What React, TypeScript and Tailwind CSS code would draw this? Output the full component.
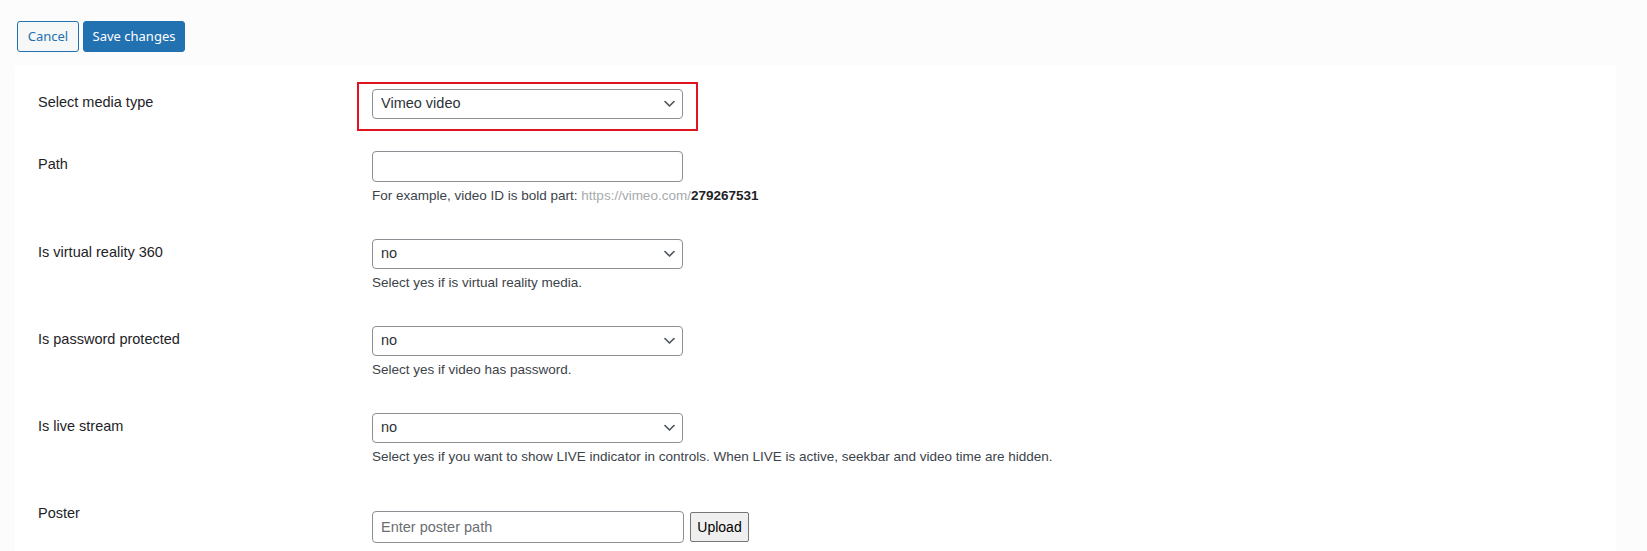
import React from 'react';

const Chevron = () => (
  <svg
    className="pointer-events-none absolute right-[8px] top-1/2 -translate-y-1/2"
    width="11"
    height="7"
    viewBox="0 0 11 7"
    fill="none"
  >
    <polyline
      points="1,1 5.5,5.5 10,1"
      stroke="#50575e"
      strokeWidth="1.7"
      strokeLinecap="round"
      strokeLinejoin="round"
    />
  </svg>
);

const Select = ({ value }: { value: string }) => (
  <div className="relative w-[311px]">
    <select
      defaultValue={value}
      className="h-[30px] w-full appearance-none rounded-[4px] border border-[#8c8f94] bg-white pl-[8px] pr-[24px] text-[14.5px] text-[#2c3338] outline-none"
    >
      <option>{value}</option>
    </select>
    <Chevron />
  </div>
);

const Help = ({ children }: { children: React.ReactNode }) => (
  <p className="mt-1 pb-[1px] text-[13.5px] leading-5 text-[#3c434a]">
    {children}
  </p>
);

const Row = ({
  label,
  children,
}: {
  label: string;
  children: React.ReactNode;
}) => (
  <div className="flex items-start">
    <div className="w-[334px] shrink-0 pt-[3px] text-[14.5px] leading-5 text-[#1d2327]">
      {label}
    </div>
    <div className="flex flex-col">{children}</div>
  </div>
);

const App = () => {
  return (
    <div
      className="min-h-screen bg-[#fcfcfc] pt-[21px]"
      style={{ fontFamily: '"Liberation Sans", Arial, sans-serif' }}
    >
      <div className="flex gap-[4px] pl-[17px]">
        <button
          className="h-[31px] w-[62px] rounded-[3px] border border-[#2271b1] bg-[#f6f7f7] text-[13px] text-[#2271b1]"
          style={{ fontFamily: '"Noto Sans", sans-serif' }}
        >
          Cancel
        </button>
        <button
          className="h-[31px] w-[102px] rounded-[3px] border border-[#2271b1] bg-[#2271b1] text-[13px] text-white"
          style={{ fontFamily: '"Noto Sans", sans-serif' }}
        >
          Save changes
        </button>
      </div>

      <div className="ml-[15px] mr-[31px] mt-[13px] flex flex-col gap-8 bg-white pb-10 pl-[23px] pt-6">
        <Row label="Select media type">
          <div className="relative">
            <div className="pointer-events-none absolute -left-[15px] -top-[7px] h-[49px] w-[341px] border-2 border-[#e0141e]" />
            <Select value="Vimeo video" />
          </div>
        </Row>

        <Row label="Path">
          <input
            type="text"
            className="h-[31px] w-[311px] rounded-[4px] border border-[#8c8f94] bg-white px-[8px] text-[14.5px] outline-none"
          />
          <Help>
            For example, video ID is bold part:{' '}
            <span className="text-[#a7aaad]">https://vimeo.com/</span>
            <span className="font-bold text-[#1d2327]">279267531</span>
          </Help>
        </Row>

        <Row label="Is virtual reality 360">
          <Select value="no" />
          <Help>Select yes if is virtual reality media.</Help>
        </Row>

        <Row label="Is password protected">
          <Select value="no" />
          <Help>Select yes if video has password.</Help>
        </Row>

        <Row label="Is live stream">
          <Select value="no" />
          <Help>
            Select yes if you want to show LIVE indicator in controls. When
            LIVE is active, seekbar and video time are hidden.
          </Help>
        </Row>

        <Row label="Poster">
          <div className="mt-[11px] flex items-center gap-[6px]">
            <input
              type="text"
              placeholder="Enter poster path"
              className="h-[32px] w-[312px] rounded-[4px] border border-[#8c8f94] bg-white px-[8px] text-[14.5px] outline-none placeholder:text-[#6b6e72]"
            />
            <button className="h-[30px] w-[59px] rounded-[2px] border border-[#767676] bg-[#efefef] text-[14px] text-black">
              Upload
            </button>
          </div>
        </Row>
      </div>
    </div>
  );
};

export default App;
